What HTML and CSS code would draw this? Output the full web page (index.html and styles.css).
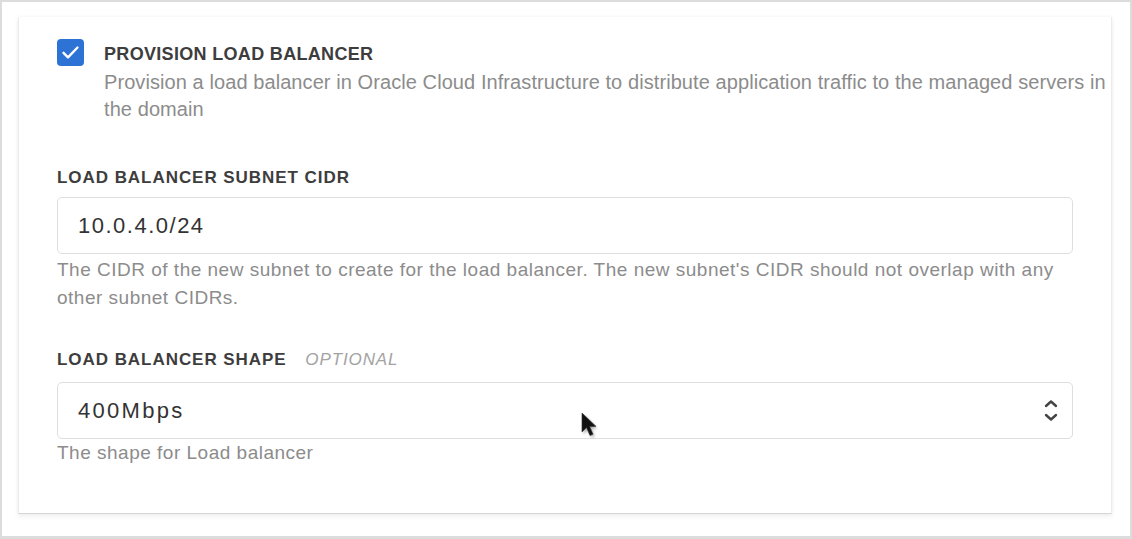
FILE: index.html
```html
<!DOCTYPE html>
<html lang="en">
<head>
<meta charset="utf-8">
<title>Load Balancer</title>
<link rel="stylesheet" href="styles.css">
</head>
<body>
<div class="frame">
  <div class="card">
    <div class="check-row">
      <span class="checkbox">
        <svg width="27" height="27" viewBox="0 0 27 27"><path d="M6.5 13.8 L11 18.3 L20.5 8.5" fill="none" stroke="#fff" stroke-width="2.4" stroke-linecap="round" stroke-linejoin="round"/></svg>
      </span>
      <div class="check-text">
        <div class="check-title">PROVISION LOAD BALANCER</div>
        <div class="check-desc">Provision a load balancer in Oracle Cloud Infrastructure to distribute application traffic to the managed servers in the domain</div>
      </div>
    </div>

    <div class="field field-first">
      <div class="label">LOAD BALANCER SUBNET CIDR</div>
      <div class="input">10.0.4.0/24</div>
      <div class="help">The CIDR of the new subnet to create for the load balancer. The new subnet's CIDR should not overlap with any other subnet CIDRs.</div>
    </div>

    <div class="field field-second">
      <div class="label">LOAD BALANCER SHAPE <span class="optional">OPTIONAL</span></div>
      <div class="input select">
        <span>400Mbps</span>
        <svg class="chevrons" width="16" height="28" viewBox="0 0 16 28"><path d="M3 9 L8 4.5 L13 9" fill="none" stroke="#444" stroke-width="2.4" stroke-linecap="round" stroke-linejoin="round"/><path d="M3 18 L8 22.5 L13 18" fill="none" stroke="#444" stroke-width="2.4" stroke-linecap="round" stroke-linejoin="round"/></svg>
      </div>
      <div class="help">The shape for Load balancer</div>
    </div>
  </div>
  <svg class="cursor" width="26" height="34" viewBox="0 0 26 34">
    <defs><filter id="sh" x="-50%" y="-50%" width="200%" height="200%"><feGaussianBlur stdDeviation="1.6"/></filter></defs>
    <path d="M3 3 L3 22 L7.5 17.5 L11 25.5 L14 24.2 L10.6 16.4 L17 16.4 Z" fill="#000" opacity="0.35" filter="url(#sh)" transform="translate(1.5,2)"/>
    <path d="M3 3 L3 22 L7.5 17.5 L11 25.5 L14 24.2 L10.6 16.4 L17 16.4 Z" fill="#111" stroke="#333" stroke-width="0.6" stroke-linejoin="round"/>
  </svg>
</div>
</body>
</html>
```

FILE: styles.css
```css
* { box-sizing: border-box; }
html, body { margin: 0; padding: 0; background: #fff; }
body { font-family: "Liberation Sans", Arial, Helvetica, sans-serif; }

.frame {
  position: relative;
  width: 1132px;
  height: 539px;
  border: 2px solid #dcdcdc;
  border-bottom-width: 3px;
  padding: 15px 18px 0 16px;
  overflow: hidden;
}

.card {
  width: 1094px;
  height: 497px;
  background: #fff;
  border-left: 1px solid #ececec;
  border-right: 1px solid #ececec;
  border-bottom: 1px solid #d6d6d6;
  box-shadow: 0 0 4px rgba(0,0,0,0.06), 0 4px 5px rgba(0,0,0,0.04);
  padding: 22px 38px 0 38px;
}

.check-row {
  display: flex;
  align-items: flex-start;
  gap: 20px;
  margin-right: -38px;
}
.checkbox {
  flex: none;
  width: 27px;
  height: 27px;
  border-radius: 4px;
  background: #2d72d5;
  display: flex;
}
.check-title {
  margin-top: 3px;
  font-size: 18px;
  line-height: 24px;
  font-weight: 700;
  color: #3d3d3d;
  letter-spacing: 0.32px;
}
.check-desc {
  margin-top: 3px;
  font-size: 20px;
  line-height: 27px;
  color: #8c8c8c;
  letter-spacing: 0.08px;
}

.field-first { margin-top: 44px; }
.field-second { margin-top: 37px; }

.label {
  font-size: 17px;
  line-height: 22px;
  font-weight: 700;
  color: #3d3d3d;
  letter-spacing: 0.95px;
  margin-bottom: 8px;
}
.optional {
  font-weight: 400;
  font-style: italic;
  color: #a3a3a3;
  font-size: 17px;
  letter-spacing: 0.9px;
  margin-left: 13px;
}
.field-second .label { margin-bottom: 11px; }

.input {
  height: 57px;
  border: 1px solid #dedede;
  border-radius: 5px;
  padding: 0 13px 0 20px;
  display: flex;
  align-items: center;
  font-size: 22px;
  color: #333;
  letter-spacing: 1.5px;
}
.select { justify-content: space-between; letter-spacing: 2.3px; }
.chevrons { display: block; }

.help {
  margin-top: 2px;
  font-size: 19px;
  line-height: 28px;
  color: #8c8c8c;
  letter-spacing: 0.5px;
}
.field-second .help { margin-top: 0; }

.cursor {
  position: absolute;
  left: 577px;
  top: 408px;
}
```
